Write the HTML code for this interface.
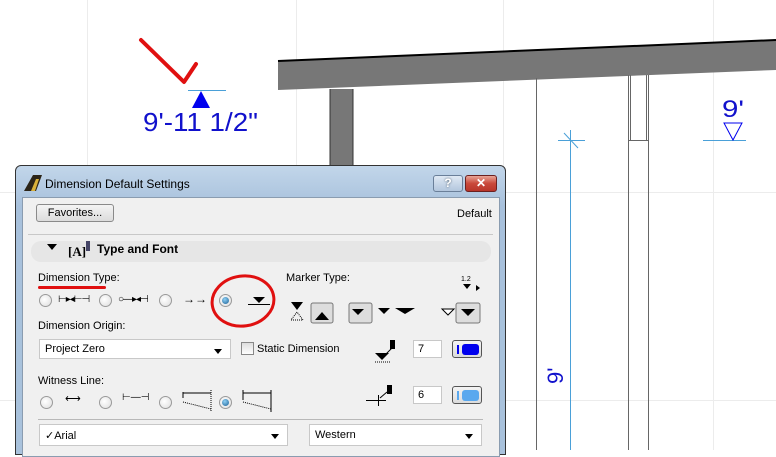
<!DOCTYPE html>
<html><head><meta charset="utf-8"><style>
*{margin:0;padding:0;box-sizing:border-box}
body{width:776px;height:450px;position:relative;overflow:hidden;background:#fff;font-family:"Liberation Sans",sans-serif;font-size:11px;color:#000}
.a{position:absolute}
.rad{position:absolute;width:13px;height:13px;border-radius:50%;border:1px solid #9a9a9a;background:radial-gradient(circle at 40% 40%,#fff,#ddd)}
.rad.on::after{content:"";position:absolute;left:2px;top:2px;width:7px;height:7px;border-radius:50%;background:radial-gradient(circle at 40% 35%,#8fd0f5,#1a5f94)}
.box{position:absolute;background:#fff;border:1px solid #c8c8c8}
.btn{position:absolute;border:1px solid #8a8a8a;border-radius:3px;background:linear-gradient(#f4f4f4,#dcdcdc)}
.dd::after{content:"";position:absolute;right:8px;top:9px;border:4px solid transparent;border-top:5px solid #000}
</style></head><body>
<svg class="a" style="left:0;top:0" width="776" height="450">
<g stroke="#ececec" stroke-width="1">
<line x1="87.5" y1="0" x2="87.5" y2="450"/><line x1="296.5" y1="0" x2="296.5" y2="450"/><line x1="503.5" y1="0" x2="503.5" y2="450"/><line x1="713.5" y1="0" x2="713.5" y2="450"/>
<line x1="0" y1="192.5" x2="776" y2="192.5"/><line x1="0" y1="400.5" x2="776" y2="400.5"/></g>
<polygon points="278,61 776,40 776,70 278,90" fill="#777"/>
<line x1="278" y1="61" x2="776" y2="40" stroke="#000" stroke-width="2"/>
<rect x="330" y="89" width="23" height="80" fill="#777"/>
<line x1="330" y1="89" x2="330" y2="169" stroke="#333"/><line x1="353" y1="89" x2="353" y2="169" stroke="#333"/>
<g stroke="#666" stroke-width="1"><line x1="536.5" y1="78" x2="536.5" y2="450"/><line x1="628.5" y1="75" x2="628.5" y2="450"/><line x1="648.5" y1="75" x2="648.5" y2="450"/><line x1="630.5" y1="75" x2="630.5" y2="140"/><line x1="646.5" y1="75" x2="646.5" y2="140"/><line x1="629" y1="140.5" x2="648" y2="140.5"/></g>
<g stroke="#4aa0d8"><line x1="570.5" y1="130" x2="570.5" y2="450"/><line x1="558" y1="140.5" x2="585" y2="140.5"/><line x1="564" y1="133" x2="578" y2="148"/>
<line x1="188" y1="90.5" x2="226" y2="90.5"/><line x1="703" y1="140.5" x2="746" y2="140.5"/></g>
<polygon points="201,91 192,108 210,108" fill="#0000ee"/>
<polygon points="724,123 742,123 733,140" fill="none" stroke="#0000ee"/>
<polyline points="141,40 184,82 196,64" fill="none" stroke="#e01010" stroke-width="4" stroke-linejoin="round" stroke-linecap="round"/>
<text x="143" y="131" font-family="Liberation Sans" font-size="26" fill="#1111cc" textLength="115" lengthAdjust="spacingAndGlyphs">9'-11 1/2"</text>
<text x="722" y="117" font-family="Liberation Sans" font-size="24" fill="#1111cc" textLength="22" lengthAdjust="spacingAndGlyphs">9'</text>
<text transform="translate(563,384) rotate(-90)" font-family="Liberation Sans" font-size="22" fill="#1111cc">9'</text>
</svg>
<div class="a" style="left:15px;top:165px;width:491px;height:290px;border:1px solid #333;border-radius:6px 6px 0 0;background:linear-gradient(#c2d6ea,#a8c1dc 40px,#a9c2dc)"></div>
<svg class="a" style="left:24px;top:175px" width="18" height="16"><polygon points="0,16 9,0 18,0 12,16" fill="#2b2418"/><polygon points="7,16 12,4 15,4 11,16" fill="#d9b13a"/></svg>
<div class="a" style="left:45px;top:177px;font-size:12px;color:#000">Dimension Default Settings</div>
<div class="a" style="left:433px;top:175px;width:30px;height:17px;border:1px solid #6a7f99;border-radius:3px;background:linear-gradient(#dfe9f4,#b2c6dd);color:#fff;text-align:center;font-size:12px;font-weight:bold;line-height:15px;text-shadow:0 0 2px #456">?</div>
<div class="a" style="left:465px;top:175px;width:32px;height:17px;border:1px solid #6b2020;border-radius:3px;background:linear-gradient(#e9a597,#c9483a 50%,#b8352a);color:#fff;text-align:center;font-size:12px;font-weight:bold;line-height:15px">✕</div>
<div class="a" style="left:22px;top:197px;width:478px;height:260px;background:#f0f0f0;border:1px solid #8a9cb0"></div>
<div class="btn" style="left:36px;top:204px;width:78px;height:18px;text-align:center;line-height:16px">Favorites...</div>
<div class="a" style="left:457px;top:208px">Default</div>
<div class="a" style="left:28px;top:234px;width:465px;height:1px;background:#c8c8c8"></div>
<div class="a" style="left:31px;top:241px;width:460px;height:21px;background:#e6e6e6;border-radius:10px"></div>
<div class="a" style="left:47px;top:244px;border:5px solid transparent;border-top:6px solid #000"></div>
<div class="a" style="left:68px;top:244px;font-family:'Liberation Serif';font-size:13px;font-weight:bold">[A]</div>
<div class="a" style="left:86px;top:241px;width:4px;height:10px;background:#446"></div>
<div class="a" style="left:97px;top:242px;font-size:12px;font-weight:bold">Type and Font</div>
<div class="a" style="left:38px;top:272px">Dimension Type:</div>
<div class="a" style="left:38px;top:286px;width:68px;height:3px;background:#e01010;border-radius:2px"></div>
<div class="a" style="left:286px;top:272px">Marker Type:</div>
<div class="a" style="left:461px;top:276px;font-size:7px">1.2</div>
<div class="a" style="left:463px;top:284px;border:4px solid transparent;border-top:5px solid #000"></div>
<div class="a" style="left:476px;top:285px;border:3px solid transparent;border-left:4px solid #000"></div>
<div class="rad" style="left:39px;top:294px"></div>
<div class="a" style="left:58px;top:294px;font-size:10px;letter-spacing:-1px">⊢▸◂⊢⊣</div>
<div class="rad" style="left:99px;top:294px"></div>
<div class="a" style="left:118px;top:294px;font-size:10px;letter-spacing:-1px">○—▸◂⊣</div>
<div class="rad" style="left:159px;top:294px"></div>
<div class="a" style="left:183px;top:292px;font-size:12px">→→</div>
<div class="rad on" style="left:219px;top:294px"></div>
<svg class="a" style="left:205px;top:272px" width="80" height="60">
<line x1="43" y1="32.5" x2="65" y2="32.5" stroke="#000"/><polygon points="48,25 60,25 54,31" fill="#000"/>
<ellipse cx="38" cy="29" rx="31" ry="25" fill="none" stroke="#e01010" stroke-width="3" transform="rotate(-8 38 29)"/></svg>
<svg class="a" style="left:288px;top:300px" width="200" height="30">
<polygon points="3,2 15,2 9,10" fill="#000"/><polygon points="9,12 3,20 15,20" fill="none" stroke="#000" stroke-dasharray="1 1"/>
<rect x="23" y="3" width="22" height="20" rx="2" fill="#ddd" stroke="#777"/><polygon points="27,20 41,20 34,12" fill="#000"/>
<rect x="61" y="3" width="23" height="20" rx="2" fill="#ddd" stroke="#777"/><polygon points="64,9 76,9 70,15" fill="#000"/>
<polygon points="90,8 102,8 96,14" fill="#000"/><polygon points="107,8 127,8 117,14" fill="#000"/>
<polygon points="154,9 166,9 160,15" fill="#fff" stroke="#000"/>
<rect x="168" y="3" width="24" height="20" rx="2" fill="#ddd" stroke="#777"/><polygon points="173,9 187,9 180,16" fill="#000"/></svg>
<div class="a" style="left:38px;top:320px">Dimension Origin:</div>
<div class="box dd" style="left:39px;top:339px;width:192px;height:20px;padding:3px 5px">Project Zero</div>
<div class="a" style="left:241px;top:342px;width:13px;height:13px;border:1px solid #888;background:linear-gradient(#ddd,#fff)"></div>
<div class="a" style="left:257px;top:343px">Static Dimension</div>
<svg class="a" style="left:370px;top:338px" width="36" height="30"><polygon points="5,15 19,15 12,22" fill="#000"/><line x1="5" y1="24" x2="20" y2="24" stroke="#000" stroke-dasharray="1 1"/><path d="M16,16 L22,10" stroke="#000"/><rect x="20" y="2" width="5" height="9" fill="#000"/></svg>
<div class="box" style="left:413px;top:340px;width:29px;height:18px;padding:2px 4px">7</div>
<div class="btn" style="left:452px;top:340px;width:30px;height:18px;border-color:#555"><div class="a" style="left:4px;top:4px;width:2px;height:9px;background:#0000ee"></div><div class="a" style="left:9px;top:3px;width:17px;height:11px;background:#0000ee;border-radius:3px"></div></div>
<div class="a" style="left:38px;top:375px">Witness Line:</div>
<div class="rad" style="left:40px;top:396px"></div>
<div class="a" style="left:65px;top:392px;font-size:11px">⟷</div>
<div class="rad" style="left:99px;top:396px"></div>
<div class="a" style="left:122px;top:392px;font-size:10px">⊢—⊣</div>
<div class="rad" style="left:159px;top:396px"></div>
<svg class="a" style="left:182px;top:388px" width="100" height="26"><line x1="1" y1="4" x2="1" y2="10" stroke="#000"/><line x1="1" y1="5" x2="29" y2="5" stroke="#000"/><line x1="29" y1="2" x2="29" y2="24" stroke="#000" stroke-dasharray="1 1"/><line x1="1" y1="14" x2="29" y2="21" stroke="#000" stroke-dasharray="1 1"/>
<line x1="61" y1="2" x2="61" y2="12" stroke="#000"/><line x1="61" y1="5" x2="89" y2="5" stroke="#000"/><line x1="89" y1="2" x2="89" y2="24" stroke="#000"/><line x1="61" y1="14" x2="89" y2="21" stroke="#000" stroke-dasharray="1 1"/></svg>
<div class="rad on" style="left:219px;top:396px"></div>
<svg class="a" style="left:366px;top:382px" width="40" height="30"><line x1="0" y1="18.5" x2="20" y2="18.5" stroke="#000"/><line x1="12.5" y1="13" x2="12.5" y2="24" stroke="#000"/><path d="M14,16 L21,10" stroke="#000"/><rect x="21" y="3" width="5" height="9" fill="#000"/></svg>
<div class="box" style="left:413px;top:386px;width:29px;height:18px;padding:2px 4px">6</div>
<div class="btn" style="left:452px;top:386px;width:30px;height:18px;border-color:#555"><div class="a" style="left:4px;top:4px;width:2px;height:9px;background:#5aa8ee"></div><div class="a" style="left:9px;top:3px;width:17px;height:11px;background:#5aa8ee;border-radius:3px"></div></div>
<div class="a" style="left:38px;top:419px;width:445px;height:1px;background:#b8b8b8"></div>
<div class="box dd" style="left:39px;top:424px;width:249px;height:22px;padding:4px 5px">✓Arial</div>
<div class="box dd" style="left:309px;top:424px;width:173px;height:22px;padding:4px 5px">Western</div>
</body></html>
